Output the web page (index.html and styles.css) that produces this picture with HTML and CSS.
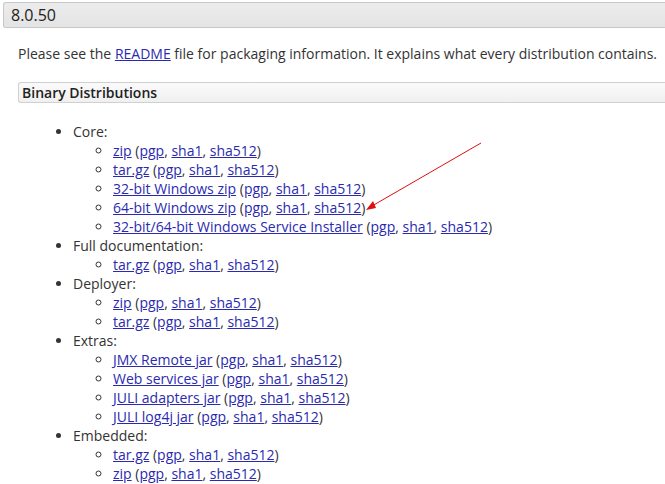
FILE: index.html
```html
<!DOCTYPE html>
<html>
<head>
<meta charset="utf-8">
<link rel="stylesheet" href="styles.css">
</head>
<body>
<div class="page">
  <h3 class="release">8.0.50</h3>
  <div class="section">
    <p class="intro">Please see the <a href="#">README</a> file for packaging information. It explains what every distribution contains.</p>
    <h4 class="sub">Binary Distributions</h4>
    <ul class="dist">
      <li>Core:
        <ul>
          <li><a href="#">zip</a> (<a href="#">pgp</a>, <a href="#">sha1</a>, <a href="#">sha512</a>)</li>
          <li><a href="#">tar.gz</a> (<a href="#">pgp</a>, <a href="#">sha1</a>, <a href="#">sha512</a>)</li>
          <li><a href="#">32-bit Windows zip</a> (<a href="#">pgp</a>, <a href="#">sha1</a>, <a href="#">sha512</a>)</li>
          <li><a href="#">64-bit Windows zip</a> (<a href="#">pgp</a>, <a href="#">sha1</a>, <a href="#">sha512</a>)</li>
          <li><a href="#">32-bit/64-bit Windows Service Installer</a> (<a href="#">pgp</a>, <a href="#">sha1</a>, <a href="#">sha512</a>)</li>
        </ul>
      </li>
      <li>Full documentation:
        <ul>
          <li><a href="#">tar.gz</a> (<a href="#">pgp</a>, <a href="#">sha1</a>, <a href="#">sha512</a>)</li>
        </ul>
      </li>
      <li>Deployer:
        <ul>
          <li><a href="#">zip</a> (<a href="#">pgp</a>, <a href="#">sha1</a>, <a href="#">sha512</a>)</li>
          <li><a href="#">tar.gz</a> (<a href="#">pgp</a>, <a href="#">sha1</a>, <a href="#">sha512</a>)</li>
        </ul>
      </li>
      <li>Extras:
        <ul>
          <li><a href="#">JMX Remote jar</a> (<a href="#">pgp</a>, <a href="#">sha1</a>, <a href="#">sha512</a>)</li>
          <li><a href="#">Web services jar</a> (<a href="#">pgp</a>, <a href="#">sha1</a>, <a href="#">sha512</a>)</li>
          <li><a href="#">JULI adapters jar</a> (<a href="#">pgp</a>, <a href="#">sha1</a>, <a href="#">sha512</a>)</li>
          <li><a href="#">JULI log4j jar</a> (<a href="#">pgp</a>, <a href="#">sha1</a>, <a href="#">sha512</a>)</li>
        </ul>
      </li>
      <li>Embedded:
        <ul>
          <li><a href="#">tar.gz</a> (<a href="#">pgp</a>, <a href="#">sha1</a>, <a href="#">sha512</a>)</li>
          <li><a href="#">zip</a> (<a href="#">pgp</a>, <a href="#">sha1</a>, <a href="#">sha512</a>)</li>
        </ul>
      </li>
    </ul>
  </div>
  <svg class="arrow" width="665" height="484" viewBox="0 0 665 484">
    <line x1="481" y1="143" x2="372" y2="206" stroke="#e01010" stroke-width="1"/>
    <polygon points="366,210 373,201 376,208" fill="#e01010"/>
  </svg>
</div>
</body>
</html>
```

FILE: styles.css
```css
html, body {
  margin: 0;
  padding: 0;
  background: #fff;
}
.page {
  position: relative;
  width: 665px;
  height: 484px;
  overflow: hidden;
  font-family: "Open Sans", "Liberation Sans", sans-serif;
  font-size: 14px;
  line-height: 19px;
  color: #333;
}
a {
  color: #2a2ab0;
  text-decoration: underline;
}
.release {
  margin: 2px 0 0 3px;
  height: 24px;
  padding: 0 0 0 7px;
  font-size: 16px;
  font-weight: normal;
  line-height: 24px;
  color: #222;
  background: linear-gradient(#ececec, #e4e4e4);
  border: 1px solid #c8c8c8;
  border-right: none;
  border-top-left-radius: 3px;
  border-bottom-left-radius: 3px;
}
.section {
  padding-left: 18px;
}
.intro {
  margin: 16px 0 0 0;
  white-space: nowrap;
}
.sub {
  margin: 19px 0 0 0;
  height: 19px;
  padding-left: 3px;
  font-size: 14px;
  font-weight: 600;
  line-height: 19px;
  color: #222;
  background: linear-gradient(#fafafa, #f0f0f0);
  border: 1px solid #d0d0d0;
  border-right: none;
  border-top-left-radius: 3px;
  border-bottom-left-radius: 3px;
}
.dist {
  margin: 19px 0 0 15px;
  padding-left: 40px;
  list-style: disc;
}
.dist ul {
  margin: 0;
  padding-left: 40px;
  list-style: circle;
}
.arrow {
  position: absolute;
  left: 0;
  top: 0;
  pointer-events: none;
}
```
